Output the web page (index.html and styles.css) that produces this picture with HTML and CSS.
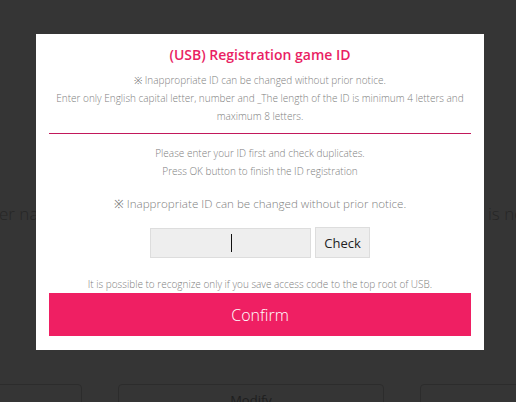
FILE: index.html
```html
<!DOCTYPE html>
<html>
<head>
<meta charset="utf-8">
<link rel="stylesheet" href="styles.css">
</head>
<body>
<div class="page">
  <div class="bg-text left">er name</div>
  <div class="bg-text right">is not</div>
  <div class="bg-buttons">
    <div class="bg-btn left"></div>
    <div class="bg-btn mid">Modify</div>
    <div class="bg-btn right"></div>
  </div>
  <div class="overlay">
    <div class="modal">
      <h1 class="title">(USB) Registration game ID</h1>
      <p class="note">※ Inappropriate ID can be changed without prior notice.<br>Enter only English capital letter, number and _The length of the ID is minimum 4 letters and maximum 8 letters.</p>
      <hr class="divider">
      <p class="note second">Please enter your ID first and check duplicates.<br>Press OK button to finish the ID registration</p>
      <p class="warn">※ Inappropriate ID can be changed without prior notice.</p>
      <div class="row">
        <div class="input"><span class="caret"></span></div>
        <button class="check">Check</button>
      </div>
      <p class="foot">It is possible to recognize only if you save access code to the top root of USB.</p>
      <button class="confirm">Confirm</button>
    </div>
  </div>
</div>
</body>
</html>
```
FILE: styles.css
```css
* { box-sizing: border-box; }
html, body { margin: 0; padding: 0; }
body {
  width: 516px;
  height: 402px;
  overflow: hidden;
  background: #353535;
  font-family: "Open Sans", "Liberation Sans", sans-serif;
}
.page {
  position: relative;
  width: 516px;
  height: 402px;
  overflow: hidden;
}
.bg-text {
  position: absolute;
  top: 203px;
  font-size: 17px;
  line-height: 22px;
  color: #262626;
  font-weight: 300;
  white-space: nowrap;
}
.bg-text.left { left: -1px; }
.bg-text.right { left: 488px; }
.bg-buttons {
  position: absolute;
  top: 384px;
  left: -40px;
  display: flex;
  gap: 36px;
}
.bg-btn {
  height: 40px;
  border: 1px solid #2c2c2c;
  border-radius: 4px;
  text-align: center;
  font-size: 13px;
  color: #1e1e1e;
  padding-top: 6px;
}
.bg-btn.left { width: 122px; }
.bg-btn.mid { width: 266px; }
.bg-btn.right { width: 140px; }
.overlay {
  position: absolute;
  inset: 0;
  padding: 34px 32px 0 36px;
}
.modal {
  width: 448px;
  height: 316px;
  background: #fff;
  padding: 10px 13px 0;
  text-align: center;
}
.title {
  margin: 0;
  font-size: 14px;
  font-weight: 600;
  color: #e91e63;
  line-height: 22px;
}
.note {
  margin: 5px 0 0;
  font-size: 10px;
  font-weight: 300;
  color: #808080;
  line-height: 18px;
}
.divider {
  margin: 8px 0 0;
  border: 0;
  border-top: 1px solid #c2185b;
  height: 0;
}
.note.second { margin-top: 10px; }
.warn {
  margin: 15px 0 0;
  font-size: 11.6px;
  font-weight: 300;
  color: #808080;
  line-height: 18px;
}
.row {
  margin-top: 15px;
  display: flex;
  justify-content: center;
  gap: 4px;
}
.input {
  width: 161px;
  height: 30px;
  background: #eee;
  border: 1px solid #ddd;
  display: flex;
  align-items: center;
  justify-content: center;
}
.caret {
  width: 1px;
  height: 18px;
  background: #111;
  margin-left: 1px;
}
.check {
  width: 55px;
  height: 31px;
  margin-top: -1px;
  background: #eee;
  border: 1px solid #ddd;
  font-family: "Open Sans", "Liberation Sans", sans-serif;
  font-size: 13px;
  color: #222;
  padding: 0;
}
.foot {
  margin: 19px 0 0;
  font-size: 10px;
  font-weight: 300;
  color: #808080;
  line-height: 14px;
}
.confirm {
  display: block;
  margin-top: 2px;
  width: 422px;
  height: 43px;
  background: #ef1f63;
  border: 0;
  color: #fff;
  font-family: "Open Sans", "Liberation Sans", sans-serif;
  font-size: 16px;
  font-weight: 300;
  padding: 0;
}
```
